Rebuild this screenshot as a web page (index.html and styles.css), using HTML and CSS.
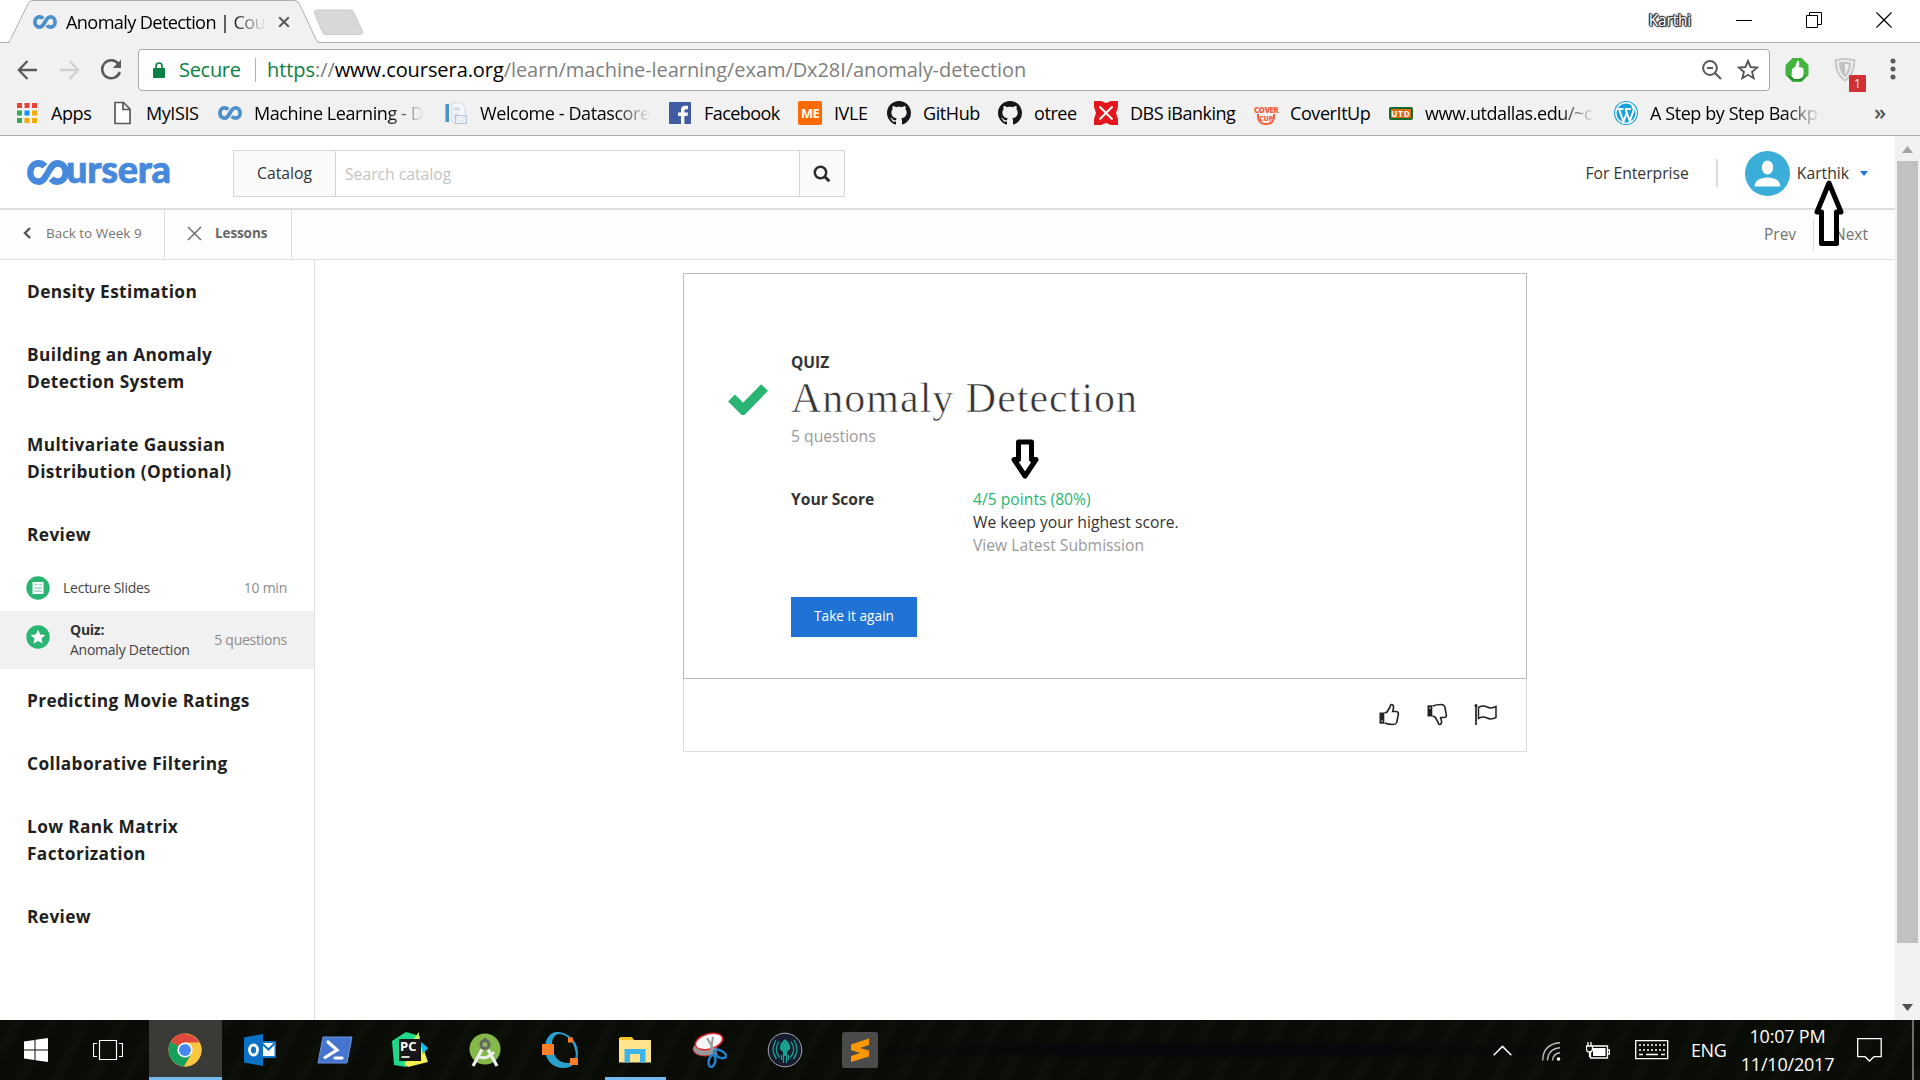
FILE: index.html
```html
<!DOCTYPE html>
<html lang="en">
<head>
<meta charset="utf-8">
<title>Anomaly Detection | Coursera</title>
<link rel="stylesheet" href="styles.css">
</head>
<body>
<svg class="defs" width="0" height="0" aria-hidden="true">
  <symbol id="infinity" viewBox="0 0 24 14"><path d="M10.2 3.6C9.2 2.4 8 1.9 6.6 1.9 3.900 1.9 1.900 4 1.900 7s2 5.100 4.700 5.100c5.200 0 5.600-10.200 10.800-10.200 2.700 0 4.700 2.100 4.700 5.100s-2 5.100-4.700 5.100c-1.500 0-2.700-.6-3.600-1.700" fill="none" stroke="currentColor" stroke-width="3.700"/></symbol>
  <symbol id="octocat" viewBox="0 0 16 16"><path fill="#15171a" d="M8 0C3.580 0 0 3.580 0 8c0 3.540 2.290 6.530 5.470 7.590.4.070.55-.17.55-.38 0-.19-.01-.82-.01-1.490-2.010.37-2.530-.49-2.690-.94-.09-.23-.48-.94-.82-1.130-.28-.15-.68-.52-.01-.53.63-.01 1.080.58 1.230.82.72 1.210 1.870.87 2.330.66.070-.52.280-.87.510-1.070-1.780-.2-3.640-.89-3.640-3.950 0-.87.310-1.590.820-2.150-.08-.2-.36-1.020.080-2.120 0 0 .670-.21 2.200.820.640-.18 1.320-.27 2-.27s1.360.09 2 .27c1.530-1.040 2.200-.82 2.200-.82.440 1.100.160 1.920.080 2.120.510.560.820 1.270.820 2.150 0 3.070-1.870 3.750-3.650 3.950.290.250.540.730.540 1.480 0 1.070-.01 1.930-.01 2.200 0 .210.150.460.550.380A8.010 8.010 0 0 0 16 8c0-4.420-3.580-8-8-8z"/></symbol>
</svg>

<div class="tabstrip">
  <div class="tab">
    <svg class="tab-shape" width="312" height="43" viewBox="0 0 312 43"><path d="M0 42.500h1.500L20 4Q21.500 .5 25 .5H286Q290 .5 291.500 4L308 39.500q1 3 4 3V43H0z" fill="#f1f1f1"/><path d="M0 42.500Q1.500 42.500 2.500 39.500L20 4Q21.500 .5 25 .5H286Q290 .5 291.500 4L308 39.500q1 3 4 3" fill="none" stroke="#adadad"/></svg>
    <svg class="tab-icon" width="24" height="14"><use href="#infinity"/></svg>
    <span class="tab-title fade">Anomaly Detection | Cou</span>
    <svg class="tab-close" width="12" height="12" viewBox="0 0 12 12"><path d="M1.200 1.200l9.600 9.600M10.800 1.200l-9.600 9.600" stroke="#5a5a5a" stroke-width="2"/></svg>
  </div>
  <svg class="newtab" width="52" height="28" viewBox="0 0 52 28"><path d="M4 1h33q3 0 4 3l8.500 18q1 3.500-2 3.500H13q-3 0-4-3L1.500 4Q1 1 4 1z" fill="#d8d8d8" stroke="#cbcbcb"/></svg>
  <div class="winctl">
    <span class="who">Karthi</span>
    <svg width="16" height="20" viewBox="0 0 16 20"><path d="M0 10.500h16" stroke="#000"/></svg>
    <svg width="16" height="20" viewBox="0 0 16 20"><path d="M.5 5.500h11v12H.5zM3.500 5.500v-3h12v12h-4" fill="none" stroke="#000"/></svg>
    <svg width="16" height="20" viewBox="0 0 16 20"><path d="M.5 2.500l15 15M15.500 2.500l-15 15" stroke="#000" stroke-width="1.200"/></svg>
  </div>
</div>

<div class="toolbar">
  <div class="navbtns">
    <svg width="21" height="20" viewBox="0 0 21 20"><path d="M20 10H2M10.500 1L1.800 10l8.700 9" fill="none" stroke="#5a5a5a" stroke-width="2.300"/></svg>
    <svg width="21" height="20" viewBox="0 0 21 20"><path d="M1 10h18M10.500 1l8.700 9-8.700 9" fill="none" stroke="#d0d0d0" stroke-width="2.300"/></svg>
    <svg width="22" height="22" viewBox="0 0 22 22"><path d="M18.500 5A9 9 0 1 0 19.800 13" fill="none" stroke="#5a5a5a" stroke-width="2.500"/><path d="M21 .8V9h-8.200z" fill="#5a5a5a"/></svg>
  </div>
  <div class="omnibox">
    <svg class="lock" width="12" height="16" viewBox="0 0 12 16"><path d="M3 7V4a3 3 0 0 1 6 0v3" fill="none" stroke="#0b8043" stroke-width="1.700"/><rect y="6" width="12" height="10" rx="1" fill="#0b8043"/></svg>
    <span class="secure">Secure</span>
    <span class="url"><span class="scheme">https</span>://<span class="host">www.coursera.org</span>/learn/machine-learning/exam/Dx28I/anomaly-detection</span>
    <svg width="20" height="20" viewBox="0 0 20 20"><circle cx="8" cy="8" r="6.900" fill="none" stroke="#5a5a5a" stroke-width="2"/><path d="M5 8h6M13 13l6 6" stroke="#5a5a5a" stroke-width="2.200"/></svg>
    <svg width="22" height="21" viewBox="0 0 22 21"><path d="M11 2l2.600 6 6.400.6-4.900 4.200 1.500 6.400L11 15.800 5.400 19.200l1.500-6.400L2 8.600l6.400-.6z" fill="none" stroke="#5a5a5a" stroke-width="1.900"/></svg>
  </div>
  <div class="exts">
    <svg width="24" height="24" viewBox="0 0 24 24"><path d="M7.500 0h9L23.500 7v10L16.500 24h-9L.5 17V7z" fill="#43b53c"/><path d="M2 17l5.500 5.500h9L22 17l-4 2H7z" fill="#208c2a"/><path d="M7 11l3-2 2.500-6.500q2 0 1.800 2.500L14 9l4 1q1.500 4-.5 9.500L14 21H9l-2.500-3z" fill="#fff"/></svg>
    <span class="shield">
      <svg width="22" height="24" viewBox="0 0 22 24"><path d="M1.500 2.500Q11-.5 20.500 2.500 20 17 11 22.500 2 17 1.500 2.500z" fill="#eee" stroke="#c6c6c6" stroke-width="2"/><path d="M6 5.500q5-1.500 10 0Q15.500 14 11 18 6.500 14 6 5.500z" fill="none" stroke="#c2c2c2" stroke-width="2"/><path d="M11 5v13Q6.500 14 6 5.500z" fill="#c2c2c2"/></svg>
      <b class="count">1</b>
    </span>
    <svg width="6" height="26" viewBox="0 0 6 26"><g fill="#5a5a5a"><circle cx="3" cy="4" r="2.500"/><circle cx="3" cy="12" r="2.500"/><circle cx="3" cy="20" r="2.500"/></g></svg>
  </div>
</div>

<div class="bookmarks">
  <a class="bm bm-apps"><svg width="24" height="24" viewBox="0 0 24 24"><g><path d="M2 2h5v5H2zM9.500 2h5v5h-5zM17 2h5v5h-5z" fill="#ea4335"/><path d="M2 9.500h5v5H2zM2 17h5v5H2z" fill="#34a853"/><path d="M9.500 9.500h5v5h-5z" fill="#1a8cff"/><path d="M17 9.500h5v5h-5zM9.500 17h5v5h-5zM17 17h5v5h-5z" fill="#f5a800"/></g></svg><span>Apps</span></a>
  <a class="bm bm-isis"><svg width="24" height="24" viewBox="0 0 24 24"><path d="M5 1.500h8.500L20 8v14.500H5zM13 2v6.500h6.500" fill="#fdfdfd" stroke="#5a5a5a" stroke-width="1.700"/></svg><span>MyISIS</span></a>
  <a class="bm bm-ml"><svg class="blue" width="24" height="14"><use href="#infinity"/></svg><span class="fade">Machine Learning - D</span></a>
  <a class="bm bm-dsc"><svg width="24" height="24" viewBox="0 0 24 24"><path d="M1.500 3h3.500v18H1.500z" fill="#4795ca"/><path d="M8 2h9l4 4v15H8z" fill="#f4f6fa" stroke="#d3d9e4"/><path d="M10 6h6v4h-6zM10 12h4v6h-4z" fill="#d8deea"/><path d="M11.500 14.500h11v8h-11z" fill="#e9edf5" stroke="#b9c2d2"/><path d="M14 17h6v2h-6z" fill="#fff" stroke="#c5ccd9" stroke-width=".5"/></svg><span class="fade">Welcome - Datascore</span></a>
  <a class="bm bm-fb"><svg width="24" height="24" viewBox="0 0 24 24"><rect x="1" y="1" width="22" height="22" rx="1" fill="#3f5da0"/><path d="M13 23v-8h-3v-3.500h3V9q0-4.200 4.500-4.200h2.500V8.200h-2q-1.600 0-1.600 1.500v1.800H20l-.5 3.500h-3.100v8z" fill="#fff"/></svg><span>Facebook</span></a>
  <a class="bm bm-ivle"><b class="fav fav-me">ME</b><span>IVLE</span></a>
  <a class="bm bm-gh"><svg width="24" height="24"><use href="#octocat"/></svg><span>GitHub</span></a>
  <a class="bm bm-ot"><svg width="24" height="24"><use href="#octocat"/></svg><span>otree</span></a>
  <a class="bm bm-dbs"><svg width="24" height="24" viewBox="0 0 24 24"><path d="M0 0h7l5 2 5-2h7v6l-2 6 2 6v6h-7l-5-2-5 2H0v-6l2-6-2-6z" fill="#e3161d"/><path d="M5.500 5.500l13 13M18.500 5.500l-13 13" stroke="#fff" stroke-width="2"/></svg><span>DBS iBanking</span></a>
  <a class="bm bm-cup"><span class="fav fav-cup"><b>COVER</b><i>CUP</i></span><span>CoverItUp</span></a>
  <a class="bm bm-utd"><b class="fav fav-utd">UTD</b><span class="fade">www.utdallas.edu/~c</span></a>
  <a class="bm bm-wp"><svg width="24" height="24" viewBox="0 0 24 24"><circle cx="12" cy="12" r="12" fill="#16a0d8"/><circle cx="12" cy="12" r="10.200" fill="none" stroke="#fff" stroke-width="1.400"/><path d="M3.500 8h6M11 8h6M5 8l4.500 12.500L12.700 12M11.500 8l4.300 12L19.500 9.500Q20 7 18 5" fill="none" stroke="#fff" stroke-width="2"/></svg><span class="fade">A Step by Step Backp</span></a>
  <span class="more">»</span>
</div>

<div class="viewport">
  <div class="page">
    <header class="head">
      <div class="logo"><svg width="42" height="25" viewBox="0 0 24 14" preserveAspectRatio="none"><use href="#infinity"/></svg><span>ursera</span></div>
      <div class="search">
        <span class="catalog">Catalog</span>
        <span class="field">Search catalog</span>
        <span class="go"><svg width="18" height="18" viewBox="0 0 18 18"><circle cx="7.500" cy="7.500" r="5.700" fill="none" stroke="#2b2b2b" stroke-width="2.500"/><path d="M11.800 11.800l4.500 4.500" stroke="#2b2b2b" stroke-width="3"/></svg></span>
      </div>
      <span class="enterprise">For Enterprise</span>
      <span class="rule"></span>
      <svg class="avatar" width="45" height="45" viewBox="0 0 45 45"><circle cx="22.500" cy="22.500" r="22.500" fill="#3badd9"/><ellipse cx="22.500" cy="16.500" rx="5.700" ry="7" fill="#fff"/><path d="M9.500 35.500q.5-6.500 7-8 6-2 12 0 6.500 1.500 7 8z" fill="#fff"/></svg>
      <span class="user">Karthik</span>
      <svg class="caret" width="8" height="5" viewBox="0 0 8 5"><path d="M0 0h8L4 5z" fill="#2073d5"/></svg>
    </header>

    <nav class="subnav">
      <a class="back"><svg width="8" height="12" viewBox="0 0 8 12"><path d="M7 1L2 6l5 5" fill="none" stroke="#555" stroke-width="2.400"/></svg><span>Back to Week 9</span></a>
      <a class="lessons"><svg width="15" height="15" viewBox="0 0 15 15"><path d="M1 1l13 13M14 1L1 14" stroke="#666" stroke-width="1.400"/></svg><span>Lessons</span></a>
      <a class="prev">Prev</a>
      <a class="next">Next</a>
    </nav>

    <div class="body">
      <aside class="side">
        <h3>Density Estimation</h3>
        <h3>Building an Anomaly<br>Detection System</h3>
        <h3>Multivariate Gaussian<br>Distribution (Optional)</h3>
        <h3>Review</h3>
        <div class="item">
          <svg width="24" height="24" viewBox="0 0 24 24"><circle cx="12" cy="12" r="11.700" fill="#2ab573"/><path d="M6.500 6h11v12h-11z" fill="#fff"/><path d="M8.500 8.500h3M13 8.500h3M8.500 12h7.500M8.500 15h7.500" stroke="#8fd8b5" stroke-width="1.300"/></svg>
          <span class="name">Lecture Slides</span><span class="meta">10 min</span>
        </div>
        <div class="item current">
          <svg width="24" height="24" viewBox="0 0 24 24"><circle cx="12" cy="12" r="11.700" fill="#2ab573"/><path d="M12 4.800l2.200 4.700 5.100.6-3.800 3.500 1 5L12 16.100l-4.500 2.500 1-5-3.800-3.500 5.100-.6z" fill="#fff"/></svg>
          <span class="name"><b>Quiz:</b><br>Anomaly Detection</span><span class="meta">5 questions</span>
        </div>
        <h3>Predicting Movie Ratings</h3>
        <h3>Collaborative Filtering</h3>
        <h3>Low Rank Matrix<br>Factorization</h3>
        <h3>Review</h3>
      </aside>

      <main class="main">
        <section class="card">
          <svg class="done" width="42" height="32" viewBox="0 0 42 32"><path d="M4.500 15L16 26.500 37.500 4.500" fill="none" stroke="#2ab573" stroke-width="9.600"/></svg>
          <div class="info">
            <div class="kind">QUIZ</div>
            <h1>Anomaly Detection</h1>
            <div class="count-q">5 questions</div>
            <div class="score">
              <b>Your Score</b>
              <div class="result"><span class="pts">4/5 points (80%)</span><span>We keep your highest score.</span><a>View Latest Submission</a>
                <svg class="mark" width="28" height="42" viewBox="0 0 28 42"><path d="M7.500 3h13v17.500h4.500L14 37 3 20.500h4.500z" fill="#fff" stroke="#000" stroke-width="5" stroke-linejoin="round"/></svg>
              </div>
            </div>
            <button class="again">Take it again</button>
          </div>
        </section>
        <div class="feedback">
          <svg width="22" height="23" viewBox="0 0 22 23"><path d="M1.500 9.500h4.800v11.200H1.500z" fill="#222"/><circle cx="4" cy="18" r=".8" fill="#fff"/><path d="M6.500 10l2.500-1 3-5q.2-2.500 1.700-2.500 2.300.5 1.800 3.500L14.700 8.500h4q2.300.7 1.500 3.500l-1.500 7.500q-1 2-3.500 2-5 0-8.500-1.500" fill="none" stroke="#222" stroke-width="1.600"/></svg>
          <svg width="22" height="23" viewBox="0 0 22 23"><path d="M1.500 13.500h4.800V2.300H1.500z" fill="#222"/><circle cx="4" cy="5" r=".8" fill="#fff"/><path d="M6.500 13l2.500 1 3 5q.2 2.500 1.700 2.500 2.300-.5 1.800-3.500l-.8-3.500h4q2.300-.7 1.500-3.500l-1.500-7.500q-1-2-3.500-2-5 0-8.500 1.500" fill="none" stroke="#222" stroke-width="1.600"/></svg>
          <svg width="24" height="23" viewBox="0 0 24 23"><path d="M2 2v20" stroke="#222" stroke-width="1.700"/><circle cx="2" cy="2.500" r="1.500" fill="#222"/><path d="M4.500 4.500q4.500-2.500 8.500-.5t9-.5v11q-5 2.500-9 .5t-8.500.5z" fill="none" stroke="#222" stroke-width="1.500"/></svg>
        </div>
      </main>
    </div>
    <svg class="pointer" width="30" height="70" viewBox="0 0 30 70"><path d="M15 5L3 34h4.500v31.500h15V34H27z" fill="#fff" stroke="#000" stroke-width="5" stroke-linejoin="round"/></svg>
  </div>
  <div class="scroll">
    <svg width="11" height="7" viewBox="0 0 11 7"><path d="M0 7L5.500 0 11 7z" fill="#a3a3a3"/></svg>
    <span class="thumb"></span>
    <svg width="11" height="7" viewBox="0 0 11 7"><path d="M0 0l5.500 7L11 0z" fill="#505050"/></svg>
  </div>
</div>

<footer class="taskbar">
  <span class="tb"><svg width="24" height="24" viewBox="0 0 24 24"><path d="M0 3.500l10.500-1.600v9.500H0zM11.500 1.700L24 0v11.400H11.500zM0 12.500h10.500V22L0 20.500zM11.500 12.500H24V24l-12.500-1.800z" fill="#fff"/></svg></span>
  <span class="tb taskview"><svg width="30" height="20" viewBox="0 0 30 20"><path d="M6.500.5h17v19h-17zM4 3.500H.5v13H4M26 3.500h3.500v13H26" fill="none" stroke="#fff" stroke-width="1.200"/></svg></span>
  <span class="tb on active"><svg width="34" height="34" viewBox="0 0 34 34"><circle cx="17" cy="17" r="16.500" fill="#fbc640"/><path d="M17 17L2.700 8.800A16.500 16.500 0 0 1 31.300 9.500z" fill="#de4a3d"/><path d="M31.800 9.500H17v7.500z" fill="#de4a3d"/><path d="M2.700 8.800A16.500 16.500 0 0 0 16 33.400L24 20 17 17z" fill="#17a05d"/><path d="M16 33.400A16.500 16.500 0 0 0 31.800 9.500H17L24 21z" fill="#fbc640"/><circle cx="17" cy="17" r="7.600" fill="#fff"/><circle cx="17" cy="17" r="6" fill="#4688f1"/></svg></span>
  <span class="tb"><svg width="34" height="34" viewBox="0 0 34 34"><path d="M18 8h14q1 0 1 1v15q0 1-1 1H18z" fill="#0f73c8"/><path d="M19 10h12.500v13H19z" fill="#fff"/><path d="M19 10.500l6.500 6 6-6" fill="none" stroke="#0f73c8" stroke-width="2"/><path d="M1 4.500L20 1v32L1 29.500z" fill="#0b72c6"/><ellipse cx="10.500" cy="17" rx="4" ry="5" fill="none" stroke="#fff" stroke-width="2.800"/></svg></span>
  <span class="tb"><svg width="36" height="28" viewBox="0 0 36 28"><path d="M6 1h29l-5 26H1z" fill="#4675cf" stroke="#6d95df"/><path d="M11 6l9 8-12 7.500M18 22h7" fill="none" stroke="#fff" stroke-width="3.200" stroke-linecap="round"/></svg></span>
  <span class="tb"><span class="pc"><svg width="36" height="36" viewBox="0 0 36 36"><path d="M0 9L14 0l14 4v14L14 35 2 33z" fill="#21d789"/><path d="M27 0v9h-7z" fill="#c4ee5a"/><path d="M12 32l18-19 6 17-20 5z" fill="#f3f14d"/><path d="M28 9l8 7-5 6z" fill="#07c3f2"/><path d="M7 7h22v22H7z" fill="#171717"/><path d="M9.500 25h8" stroke="#fff" stroke-width="1.700"/></svg><b>PC</b></span></span>
  <span class="tb"><svg width="36" height="36" viewBox="0 0 36 36"><circle cx="18" cy="17" r="15.500" fill="#85b84b"/><path d="M18 6v4" stroke="#666" stroke-width="3"/><circle cx="18" cy="12.500" r="4" fill="#8fbf55" stroke="#666" stroke-width="3"/><path d="M15 17.500L6 34M21 17.500L30 34" stroke="#eee" stroke-width="3.200"/><path d="M10 24q9 5 17-4" fill="none" stroke="#eee" stroke-width="3"/></svg></span>
  <span class="tb"><svg width="36" height="36" viewBox="0 0 36 36"><path fill-rule="evenodd" d="M15 0C27 0 36 10 36 21c0 9-6 15-14 15C10 36 3 28 3 16 3 7 8 0 15 0zM18 2C11 2 9 9 10.500 17c2 9 7 13.500 14 14 7.500 0 10-4 9-11C32 10 26 3 18 2z" fill="#2a9fcb"/><path d="M0 12h12v11H0zM26 5.500h5v5h-5zM28 26h8v7h-8z" fill="#ff7d27"/></svg></span>
  <span class="tb on explorer"><svg width="32" height="28" viewBox="0 0 32 28"><path d="M0 2h13l2 2H32v22.500H0z" fill="#ffe48d"/><path d="M1 1h12l1.500 3H1z" fill="#f5c426"/><path d="M5.500 13h21v13.500h-5.500V18h-10v8.500H5.500z" fill="#3bb4ea"/></svg></span>
  <span class="tb"><svg width="36" height="36" viewBox="0 0 36 36"><ellipse cx="13" cy="17" rx="12" ry="7" fill="#999" stroke="#c33"/><ellipse cx="17" cy="9.500" rx="14" ry="7.500" transform="rotate(-16 17 9.500)" fill="#f4f6f7" stroke="#de2b31" stroke-width="1.500"/><path d="M15 6l10 17M21 5l-3 18" stroke="#999" stroke-width="2"/><ellipse cx="28" cy="22" rx="6.500" ry="3.500" transform="rotate(25 28 22)" fill="none" stroke="#247fc9" stroke-width="2.500"/><ellipse cx="20" cy="29" rx="3.200" ry="6" transform="rotate(12 20 29)" fill="none" stroke="#247fc9" stroke-width="2.500"/></svg></span>
  <span class="tb"><svg width="36" height="36" viewBox="0 0 36 36"><circle cx="18" cy="18" r="16.800" fill="#161b2d" stroke="#a7a9b0"/><path d="M18 7q6 5 5 10l-3 3v4h-4v-4l-3-3q-1-5 5-10z" fill="#17a190"/><path d="M9 8Q3 18 9.500 27M12 9.500Q6.500 18 12.500 25.500M27 8q6 10-.5 19M24 9.500q5.500 8.500-.5 16M16.500 22v9M19.500 22v9M14.500 23v5M21.500 23v5" fill="none" stroke="#17a190" stroke-width="1.300"/></svg></span>
  <span class="tb"><svg width="36" height="36" viewBox="0 0 36 36"><rect width="36" height="36" rx="2.500" fill="#4b4b4b"/><path d="M9 12.500L27 6.500v6.500l-9 3 9 2.500v6L9 30v-6l9-3-9-3z" fill="#ff9800"/></svg></span>
  <div class="tray">
    <svg width="19" height="11" viewBox="0 0 19 11"><path d="M.7 10.200L9.500 1.400l8.800 8.800" fill="none" stroke="#fff" stroke-width="1.500"/></svg>
    <svg class="wifi" width="19" height="19" viewBox="0 0 19 19"><g fill="none" stroke="#bbb" stroke-width="1.400"><path d="M.7 18.500Q1 2 18 .7M5.500 18.500Q6 7 18 5.700M10.500 18.500Q11 11.500 18 10.700"/></g><circle cx="16.500" cy="17" r="1.800" fill="#fff"/></svg>
    <svg class="batt" width="24" height="17" viewBox="0 0 24 17"><path d="M4.500 4h17v12h-17zM21.500 8h2v4h-2" fill="none" stroke="#fff" stroke-width="1.300"/><path d="M7 6h12.500v8H7z" fill="#fff"/><path d="M.5 4h6v3q0 3-3 3t-3-3zM2 0v4M5 0v4M3.500 10v5" fill="#111" stroke="#fff" stroke-width="1.300"/></svg>
    <svg class="kbd" width="34" height="20" viewBox="0 0 34 20"><path d="M.7.7h32v18H.7z" fill="none" stroke="#fff" stroke-width="1.300"/><path d="M4 5h26M4 10h26" stroke="#fff" stroke-width="1.300" stroke-dasharray="2 2"/><path d="M4 14.500h4M11 14.500h12M26 14.500h4" stroke="#fff" stroke-width="1.300"/></svg>
    <span class="lang">ENG</span>
    <span class="clock"><span class="time">10:07 PM</span><span class="date">11/10/2017</span></span>
    <svg class="notif" width="25" height="25" viewBox="0 0 25 25"><path d="M.7.7h23.500v18H17L12.500 23 8 18.700H.7z" fill="none" stroke="#fff" stroke-width="1.300"/></svg>
    <span class="desk"></span>
  </div>
</footer>
</body>
</html>
```
FILE: styles.css
```css
* { box-sizing: border-box; }
html, body { margin: 0; height: 100%; }
body {
  width: 1920px; height: 1080px; overflow: hidden;
  display: flex; flex-direction: column;
  background: #fff; color: #000;
  font-family: "Open Sans", "Noto Sans", sans-serif;
}
svg { display: block; flex: none; }
.defs { position: absolute; }
.fade { -webkit-mask-image: linear-gradient(to right, #000 calc(100% - 36px), transparent); mask-image: linear-gradient(to right, #000 calc(100% - 36px), transparent); }

/* Browser tabs */
.tabstrip { height: 43px; flex: none; display: flex; align-items: flex-start; border-bottom: 1px solid #adadad; padding-left: 8px; }
.tab { position: relative; width: 306px; height: 43px; display: flex; align-items: center; padding-left: 25px; }
.tab-shape { position: absolute; left: 0; top: 0; }
.tab-icon { position: relative; color: #4b8fcc; }
.tab-title { position: relative; margin-left: 9px; width: 200px; font-size: 18.200px; letter-spacing: -.65px; line-height: 26px; white-space: nowrap; }
.tab-close { position: relative; margin-left: 12px; }
.newtab { margin-top: 9px; margin-left: -1px; }
.winctl { flex: 1; height: 40px; display: flex; align-items: center; justify-content: flex-end; gap: 54px; padding-right: 28px; }
.who { color: #fff; font-size: 15.500px; letter-spacing: -.2px; line-height: 20px; margin-right: -9px; text-shadow: 0 0 1px #333, 1px 0 1px #333, -1px 0 1px #333, 0 1px 1px #333, 0 -1px 1px #333, 1px 1px 1px #333, -1px -1px 1px #333; }

/* Address bar */
.toolbar { height: 48px; flex: none; display: flex; align-items: center; background: #f1f1f1; padding: 5px 20px 0 17px; }
.navbtns { width: 121px; flex: none; display: flex; align-items: center; gap: 21px; }
.navbtns svg:last-child { margin-left: -1px; }
.omnibox { width: 1632px; flex: none; height: 42px; display: flex; align-items: center; background: #fff; border: 1px solid #a8a8a8; border-radius: 4px; padding: 0 10px 0 14px; font-size: 20px; letter-spacing: -.3px; white-space: nowrap; }
.lock { margin-right: 14px; }
.secure { width: 77px; height: 24px; line-height: 24px; color: #0b8043; border-right: 1px solid #b0b0b0; }
.url { flex: 1; margin-left: 11px; color: #808080; letter-spacing: -.07px; }
.scheme { color: #0b8043; }
.host { color: #000; }
.omnibox > svg:last-child { margin-left: 15px; }
.exts { flex: 1; display: flex; align-items: center; padding-left: 15px; }
.shield { position: relative; flex: none; margin-left: 25px; width: 56px; }
.count { position: absolute; left: 15px; top: 17px; width: 17px; height: 17px; background: #d03034; color: #fff; font-size: 12px; font-weight: 400; line-height: 18px; text-align: center; border-radius: 1px; }

/* Bookmarks */
.bookmarks { height: 45px; flex: none; display: flex; align-items: center; background: #f1f1f1; border-bottom: 1px solid #adadad; padding-left: 15px; font-size: 18px; letter-spacing: -.42px; white-space: nowrap; }
.bm { flex: none; height: 26px; display: flex; align-items: center; gap: 12px; line-height: 26px; }
.bm > span:last-child { flex: 1; }
.bm-apps { width: 95px; }
.bm-isis { width: 108px; }
.bm-ml { width: 206px; margin-right: 20px; }
.bm-dsc { width: 205px; margin-right: 19px; }
.bm-fb { width: 130px; letter-spacing: -.55px; }
.bm-ivle { width: 89px; }
.bm-gh { width: 111px; }
.bm-ot { width: 96px; }
.bm-dbs { width: 160px; letter-spacing: -.5px; }
.bm-cup { width: 135px; }
.bm-utd { width: 206px; margin-right: 19px; }
.bm-wp { width: 207px; }
.blue { color: #4b8fcc; }
.fav { flex: none; width: 24px; color: #fff; text-align: center; letter-spacing: 0; }
.fav-me { height: 24px; border-radius: 2px; background: #ff6a00; font-size: 13px; line-height: 24px; letter-spacing: -.8px; }
.fav-cup { display: flex; flex-direction: column; align-items: center; color: #f0643c; font-size: 8px; line-height: 8px; font-weight: 800; padding-top: 4px; }
.fav-cup b { letter-spacing: -.6px; font-weight: 800; }
.fav-cup i { font-style: normal; width: 18px; border: 2px solid #f0643c; border-top: 0; border-radius: 0 0 8px 8px; font-size: 7px; line-height: 9px; }
.fav-utd { height: 13px; background: #dd6b14; border: 2px solid #14692c; border-radius: 2px; font-size: 8px; line-height: 9px; letter-spacing: 1px; }
.more { margin-left: 53px; font-size: 22px; font-weight: 600; color: #555; line-height: 24px; margin-top: -5px; }

/* Web page */
.viewport { height: 884px; flex: none; display: flex; }
.page { position: relative; width: 1895px; display: flex; flex-direction: column; }
.head { height: 74px; flex: none; display: flex; align-items: center; border-bottom: 2px solid #dedede; padding: 3px 27px 0 27px; font-size: 15.700px; color: #333; }
.logo { width: 206px; display: flex; align-items: center; color: #4688dc; margin-top: -3px; }
.logo span { font-family: Lato, sans-serif; font-weight: 900; font-size: 38px; line-height: 30px; letter-spacing: -.3px; margin: -8px 0 0 -3px; -webkit-text-stroke: .7px #4688dc; }
.search { width: 612px; height: 47px; display: flex; border: 1px solid #d6d6d6; line-height: 45px; }
.catalog { width: 102px; background: #fafafa; border-right: 1px solid #d6d6d6; text-align: center; }
.field { flex: 1; color: #c4c4c4; padding: 1px 0 0 9px; }
.go { width: 45px; background: #fafafa; border-left: 1px solid #d6d6d6; display: flex; align-items: center; justify-content: center; }
.enterprise { margin: -1px 0 0 auto; }
.rule { width: 2px; height: 28px; background: #ddd; margin: -1px 27px 0; }
.avatar { margin-top: -1px; }
.user { margin: -1px 11px 0 7px; }
.caret { margin-top: -1px; }

.subnav { height: 50px; flex: none; display: flex; align-items: center; border-bottom: 1px solid #dedede; background: #fefefe; color: #757575; }
.back, .lessons { height: 100%; display: flex; align-items: center; border-right: 1px solid #dedede; font-size: 13.500px; padding-bottom: 3px; }
.back { width: 165px; padding-left: 23px; gap: 15px; }
.lessons { width: 127px; padding-left: 22px; gap: 13px; font-weight: 700; color: #666; letter-spacing: -.1px; }
.prev { margin-left: auto; width: 50px; height: 32px; line-height: 31px; border-right: 1px solid #dedede; font-size: 15.500px; }
.next { width: 81px; padding-left: 20px; font-size: 15.500px; line-height: 31px; height: 32px; }

.body { flex: 1; display: flex; min-height: 0; }
.side { width: 315px; border-right: 1px solid #dedede; }
.side h3 { margin: 0; padding: 18px 0 18px 27px; font-size: 17.300px; line-height: 27px; font-weight: 700; letter-spacing: .38px; color: #1f1f1f; }
.item { height: 45px; display: flex; align-items: center; padding: 0 27px 1px 26px; font-size: 14px; letter-spacing: -.25px; line-height: 20px; color: #444; }
.item .name { margin-left: 13px; flex: 1; }
.item .meta { color: #8c8c8c; }
.current { height: 58px; padding-bottom: 0; background: #f1f1f1; }
.current svg { margin-top: -6px; }
.current .name { margin-left: 20px; }
.current b { font-weight: 700; color: #333; }

.main { width: 844px; margin: 13px 0 0 368px; }
.card { height: 406px; border: 1px solid #bbb; padding: 76px 0 0 44px; display: flex; }
.done { margin: 33px 1px 0 -1px; }
.info { margin-left: 21px; color: #333; font-size: 15.700px; line-height: 23px; }
.kind { font-weight: 700; font-size: 15.500px; line-height: 24px; }
.info h1 { margin: 0 0 3px; font-family: "Liberation Serif", serif; font-weight: 400; font-size: 42px; line-height: 48px; letter-spacing: 1px; white-space: nowrap; -webkit-text-stroke: .6px #fff; }
.count-q { color: #9a9a9a; }
.score { display: flex; margin-top: 40px; }
.score b { width: 182px; font-weight: 700; font-size: 15.600px; }
.result { position: relative; display: flex; flex-direction: column; }
.result .pts { color: #2ab573; }
.result a { color: #9a9a9a; }
.mark { position: absolute; left: 38px; top: -49px; }
.again { display: block; margin-top: 40px; width: 126px; height: 40px; border: 0; padding: 0 0 3px; background: #2073d5; color: #fff; font: 400 13.700px "Open Sans", sans-serif; }
.feedback { height: 73px; border: 1px solid #dedede; border-top: 0; display: flex; align-items: center; justify-content: flex-end; gap: 26px; padding: 0 28px 1px 0; }
.pointer { position: absolute; left: 1814px; top: 42px; }

.scroll { width: 25px; background: #f1f1f1; display: flex; flex-direction: column; align-items: center; padding: 10px 0 9px; }
.thumb { width: 21px; height: 782px; margin: 8px 0 auto; background: #c1c1c1; }

/* Taskbar */
.taskbar { height: 60px; flex: none; display: flex; color: #fff; background: radial-gradient(ellipse at 1220px 30px, #07080c 0, #07080c 180px, transparent 420px), repeating-linear-gradient(118deg, #0a0d06 0 9px, #0d1008 13px 17px, #090b06 24px 31px); }
.tb { width: 73px; margin-right: 2px; display: flex; align-items: center; justify-content: center; }
.tb:first-child { width: 72px; margin: 0; }
.taskview { width: 72px; margin-right: 5px; }
.on { box-shadow: inset 0 -3px #76b9ed; }
.active { background: #3a3b36; padding-right: 2px; }
.tb:not(.on):not(.taskview):not(:first-child) { padding-right: 2px; }
.explorer { width: 61px; margin: 0 8px 0 6px; padding-right: 1px; }
.pc { position: relative; }
.pc b { position: absolute; left: 8.500px; top: 7px; font-size: 13px; line-height: 14px; font-weight: 700; }
.tray { flex: 1; display: flex; align-items: center; justify-content: flex-end; font-size: 18px; letter-spacing: -.45px; }
.wifi { margin-left: 30px; margin-top: 2px; }
.batt { margin-left: 25px; }
.kbd { margin-left: 25px; }
.lang { margin-left: 22px; width: 35px; }
.clock { margin-left: 14px; width: 98px; display: flex; flex-direction: column; text-align: center; line-height: 28px; padding: 0 3px 0 0; letter-spacing: -.2px; }
.notif { margin: 0 30px 0 19px; }
.desk { width: 2px; height: 60px; background: #6d6d6d; margin-right: 6px; }
```
